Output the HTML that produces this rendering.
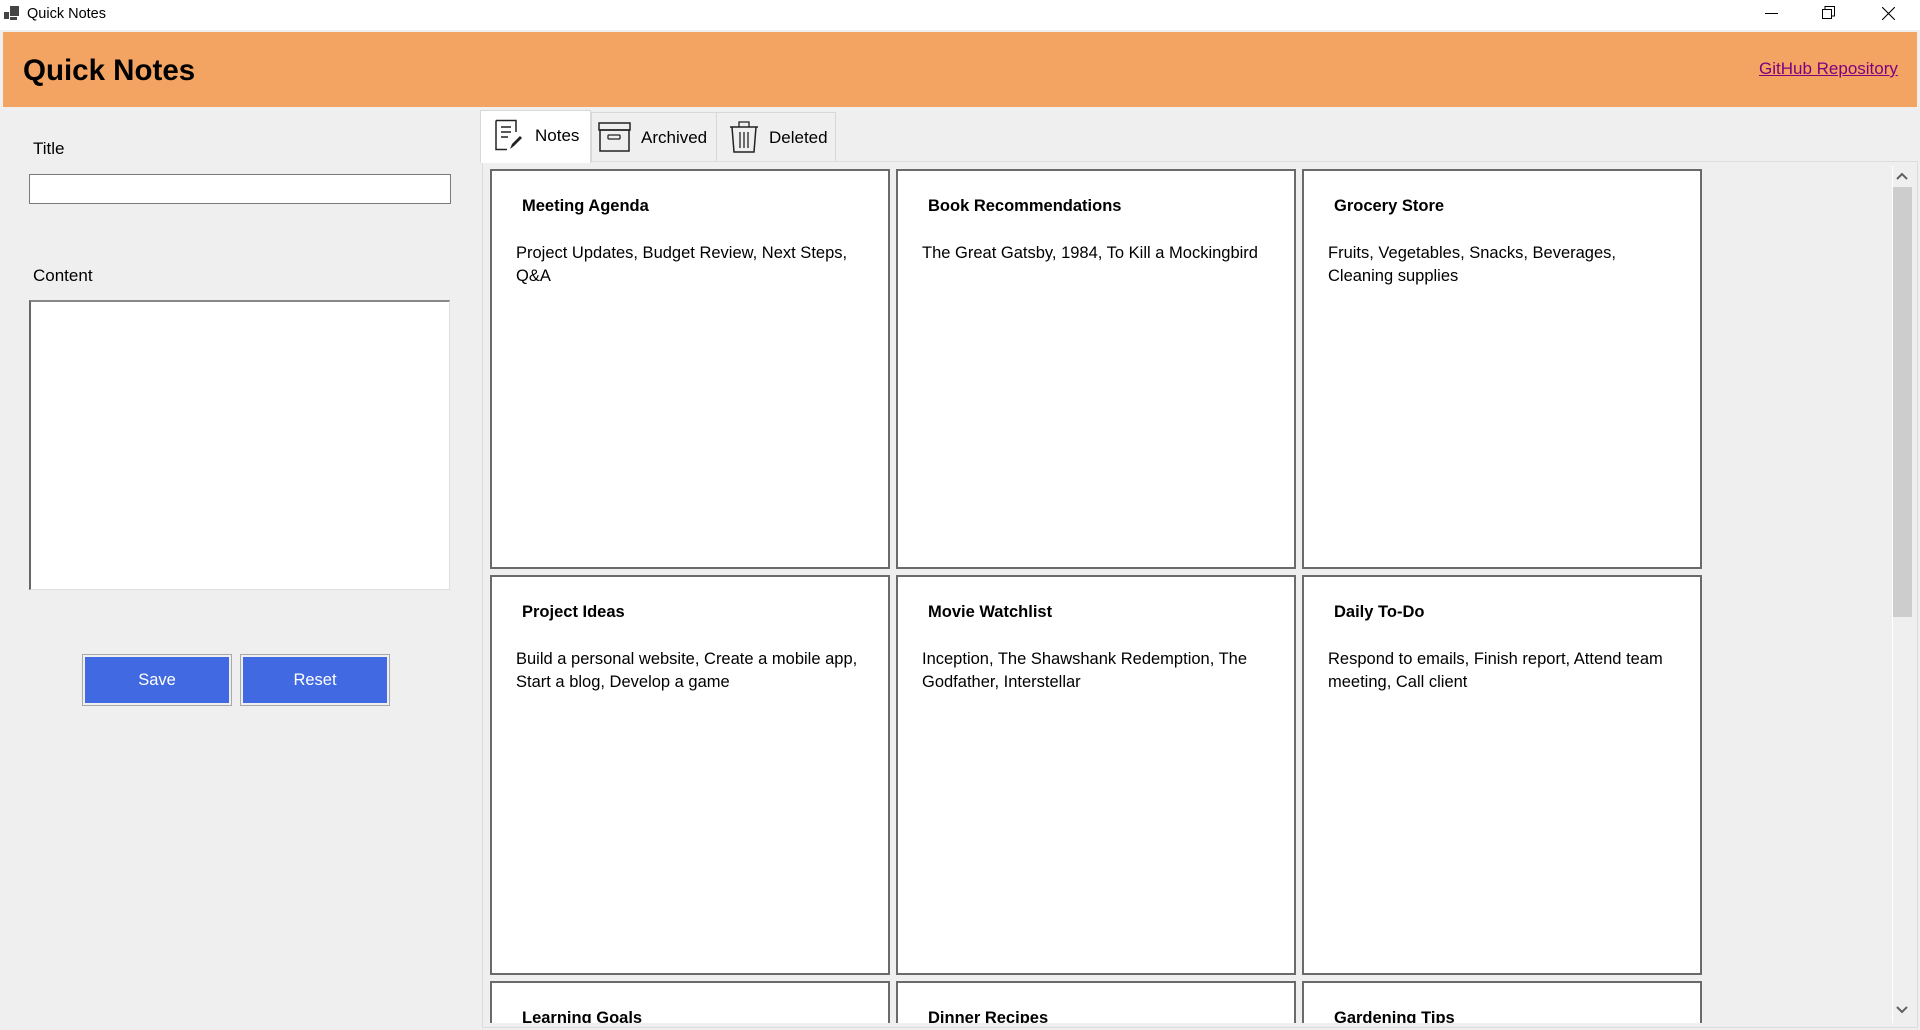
<!DOCTYPE html>
<html><head><meta charset="utf-8"><style>
*{margin:0;padding:0;box-sizing:border-box}
body{width:1920px;height:1030px;background:#efefef;font-family:"Liberation Sans",sans-serif;position:relative;overflow:hidden;color:#000}
.a{position:absolute}
.card{position:absolute;width:400px;height:400px;background:#fff;border:2px solid #6a6a6a;overflow:hidden}
.card h3{position:absolute;left:30px;top:26px;font-size:16.5px;font-weight:bold;white-space:nowrap}
.card p{position:absolute;left:24px;top:71px;width:345px;font-size:16.5px;line-height:23px}
.tab{position:absolute;font-size:17px;display:flex;align-items:center}
.btn{position:absolute;width:150px;height:52px;border:1px solid #a8a8a8;padding:2px;background:#efefef}
.btn div{background:#4169e1;width:100%;height:100%;color:#fff;font-size:16.5px;display:flex;align-items:center;justify-content:center}
</style></head><body>
<div class="a" style="left:0;top:0;width:1920px;height:30px;background:#fff"></div>
<svg class="a" style="left:4px;top:6px" width="16" height="15"><rect x="0" y="6" width="5" height="7" fill="#444"/><rect x="6" y="0" width="9" height="10" fill="#444"/><rect x="6" y="11" width="7" height="3" fill="#444"/></svg>
<div class="a" style="left:27px;top:6px;font-size:14.5px">Quick Notes</div>
<div class="a" style="left:1765px;top:13px;width:13px;height:1px;background:#000"></div>
<svg class="a" style="left:1822px;top:6px" width="14" height="14"><rect x="0.5" y="3.5" width="9" height="9" fill="none" stroke="#000"/><path d="M3 3.5V0.5H12.5V10H9.5" fill="none" stroke="#000"/></svg>
<svg class="a" style="left:1882px;top:7px" width="13" height="13"><path d="M0 0L13 13M13 0L0 13" stroke="#000" stroke-width="1.1"/></svg>
<div class="a" style="left:3px;top:32px;width:1914px;height:75px;background:#f3a462"></div>
<div class="a" style="left:23px;top:54px;font-size:29.5px;font-weight:bold">Quick Notes</div>
<div class="a" style="left:1759px;top:59px;font-size:17px;color:#800080;text-decoration:underline">GitHub Repository</div>
<div class="a" style="left:33px;top:139px;font-size:17px">Title</div>
<div class="a" style="left:29px;top:174px;width:422px;height:30px;background:#fff;border:1px solid #7a7a7a"></div>
<div class="a" style="left:33px;top:266px;font-size:17px">Content</div>
<div class="a" style="left:29px;top:300px;width:421px;height:290px;background:#fff;border-left:2px solid #666;border-top:2px solid #888;border-right:1px solid #ddd;border-bottom:1px solid #ddd"></div>
<div class="btn" style="left:82px;top:654px"><div>Save</div></div>
<div class="btn" style="left:240px;top:654px"><div>Reset</div></div>
<div class="a" style="left:482px;top:161px;width:1436px;height:867px;border:1px solid #dcdcdc;background:#efefef"></div>
<div class="a" style="left:480px;top:110px;width:111px;height:53px;background:#fff;border:1px solid #d8d8d8;border-bottom:none"></div>
<div class="a" style="left:591px;top:112px;width:126px;height:50px;border:1px solid #d8d8d8;border-bottom:none"></div>
<div class="a" style="left:716px;top:112px;width:120px;height:50px;border:1px solid #d8d8d8;border-bottom:none"></div>
<svg class="a" style="left:494px;top:119px" width="30" height="32"><path d="M2 1.5H22V13M2 1.5V30.5H13" fill="none" stroke="#222" stroke-width="1.5"/><path d="M7 8H17M7 13H17M7 18H14" stroke="#222" stroke-width="1.5"/><path d="M16 30L18 25L26 17L28 19L20 27Z" fill="#222"/></svg>
<div class="tab" style="left:535px;top:126px">Notes</div>
<svg class="a" style="left:598px;top:122px" width="33" height="30"><rect x="1" y="1" width="31" height="7" fill="none" stroke="#222" stroke-width="1.5"/><rect x="2" y="8" width="29" height="21" fill="none" stroke="#222" stroke-width="1.5"/><rect x="10" y="13" width="12" height="4" rx="1" fill="none" stroke="#222" stroke-width="1.3"/></svg>
<div class="tab" style="left:641px;top:128px">Archived</div>
<svg class="a" style="left:729px;top:120px" width="30" height="34"><path d="M1 7H29" stroke="#222" stroke-width="1.5"/><path d="M10 7V2H20V7" fill="none" stroke="#222" stroke-width="1.3"/><path d="M3 7L5 32H25L27 7" fill="none" stroke="#222" stroke-width="1.5"/><path d="M11 12V28M15 12V28M19 12V28" stroke="#222" stroke-width="1.3"/></svg>
<div class="tab" style="left:769px;top:128px">Deleted</div>
<div class="card" style="left:490px;top:169px"><h3>Meeting Agenda</h3><p>Project Updates, Budget Review, Next Steps, Q&amp;A</p></div>
<div class="card" style="left:896px;top:169px"><h3>Book Recommendations</h3><p>The Great Gatsby, 1984, To Kill a Mockingbird</p></div>
<div class="card" style="left:1302px;top:169px"><h3>Grocery Store</h3><p>Fruits, Vegetables, Snacks, Beverages, Cleaning supplies</p></div>
<div class="card" style="left:490px;top:575px"><h3>Project Ideas</h3><p>Build a personal website, Create a mobile app, Start a blog, Develop a game</p></div>
<div class="card" style="left:896px;top:575px"><h3>Movie Watchlist</h3><p>Inception, The Shawshank Redemption, The Godfather, Interstellar</p></div>
<div class="card" style="left:1302px;top:575px"><h3>Daily To-Do</h3><p>Respond to emails, Finish report, Attend team meeting, Call client</p></div>
<div class="card" style="left:490px;top:981px;height:42px;border-bottom:none"><h3>Learning Goals</h3></div>
<div class="card" style="left:896px;top:981px;height:42px;border-bottom:none"><h3>Dinner Recipes</h3></div>
<div class="card" style="left:1302px;top:981px;height:42px;border-bottom:none"><h3>Gardening Tips</h3></div>
<div class="a" style="left:1892px;top:166px;width:1px;height:857px;background:#fff"></div>
<div class="a" style="left:1893px;top:187px;width:19px;height:430px;background:#cdcdcd"></div>
<svg class="a" style="left:1896px;top:172px" width="12" height="8"><path d="M1 7L6 2L11 7" fill="none" stroke="#606060" stroke-width="2"/></svg>
<svg class="a" style="left:1896px;top:1006px" width="12" height="8"><path d="M1 1L6 6L11 1" fill="none" stroke="#606060" stroke-width="2"/></svg>
</body></html>
